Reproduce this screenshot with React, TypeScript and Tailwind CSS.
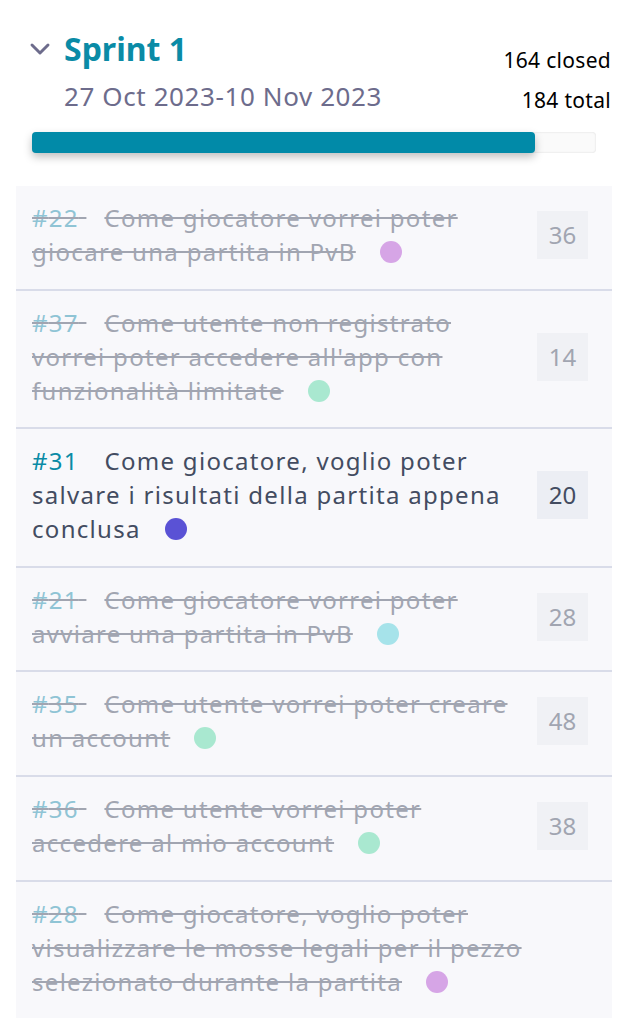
import { ChevronDown } from 'lucide-react';

type Story = {
  id: number;
  lines: string[];
  points?: number;
  dot: string;
  done: boolean;
};

const stories: Story[] = [
  { id: 22, lines: ['Come giocatore vorrei poter', 'giocare una partita in PvB'], points: 36, dot: 'bg-[#d6a5e6]', done: true },
  { id: 37, lines: ['Come utente non registrato', "vorrei poter accedere all'app con", 'funzionalità limitate'], points: 14, dot: 'bg-[#a9e8d0]', done: true },
  { id: 31, lines: ['Come giocatore, voglio poter', 'salvare i risultati della partita appena', 'conclusa'], points: 20, dot: 'bg-[#5a52d5]', done: false },
  { id: 21, lines: ['Come giocatore vorrei poter', 'avviare una partita in PvB'], points: 28, dot: 'bg-[#a6e3ea]', done: true },
  { id: 35, lines: ['Come utente vorrei poter creare', 'un account'], points: 48, dot: 'bg-[#a9e8d0]', done: true },
  { id: 36, lines: ['Come utente vorrei poter', 'accedere al mio account'], points: 38, dot: 'bg-[#a9e8d0]', done: true },
  { id: 28, lines: ['Come giocatore, voglio poter', 'visualizzare le mosse legali per il pezzo', 'selezionato durante la partita'], dot: 'bg-[#d6a5e6]', done: true },
];

const StoryRow = ({ story }: { story: Story }) => {
  const last = story.lines.length - 1;
  return (
    <div className="flex items-center justify-between pl-4 pr-6 pt-[15px] pb-[19.6px]">
      <div
        className={`text-[24px] leading-[34px] tracking-[1.3px] whitespace-nowrap ${
          story.done ? 'text-[#a1a5b1] line-through' : 'text-[#434c61]'
        }`}
      >
        {story.lines.map((line, i) => (
          <div key={i} className="flex items-center">
            {i === 0 && (
              <span className={story.done ? 'text-[#8fc4d5]' : 'text-[#0a8ba6]'}>
                #{story.id}
                {'\u00a0'}
              </span>
            )}
            {i === 0 && <span className="w-[18px]" />}
            <span>{line}</span>
            {i === last && <span className={`ml-6 inline-block w-[22px] h-[22px] rounded-full ${story.dot}`} />}
          </div>
        ))}
      </div>
      {story.points !== undefined && (
        <div
          className={`w-[51px] h-[48px] flex items-center justify-center text-[24px] ${
            story.done ? 'bg-[#f0f1f5] text-[#a1a5b1]' : 'bg-[#eceef4] text-[#434c61]'
          }`}
        >
          {story.points}
        </div>
      )}
    </div>
  );
};

export default function App() {
  return (
    <div className="min-h-[1034px] w-[644px] bg-white" style={{ fontFamily: '"Noto Sans", "Open Sans", sans-serif' }}>
      <div className="pl-8 pr-[33px] pt-[28px]">
        <div className="flex justify-between">
          <div>
            <div className="flex items-center">
              <ChevronDown className="w-8 h-8 text-[#6d6c8c] -ml-2" strokeWidth={2.2} />
              <span className="ml-[8px] text-[32px] leading-[42px] font-bold text-[#0a8ba6]">Sprint 1</span>
            </div>
            <div className="ml-8 mt-[10px] text-[26px] leading-[32px] tracking-[0.6px] text-[#6d6c8c]">27 Oct 2023-10 Nov 2023</div>
          </div>
          <div className="flex flex-col items-end text-[21px] leading-[40px] tracking-[0.3px] text-black pt-[12px]">
            <span>164 closed</span>
            <span>184 total</span>
          </div>
        </div>
        <div className="mt-[12px] mr-[15px] h-[21px] rounded-[4px] bg-[#fafafa] shadow-[inset_0_0_2px_rgba(0,0,0,0.15)]">
          <div className="h-full w-[89.2%] rounded-[4px] bg-[#018aa8] shadow-[0_4px_8px_rgba(0,0,0,0.25)]" />
        </div>
      </div>
      <div className="ml-4 mr-8 mt-[33px] bg-[#f8f8fb] divide-y-2 divide-[#d9dce9]">
        {stories.map((s) => (
          <StoryRow key={s.id} story={s} />
        ))}
      </div>
    </div>
  );
}
